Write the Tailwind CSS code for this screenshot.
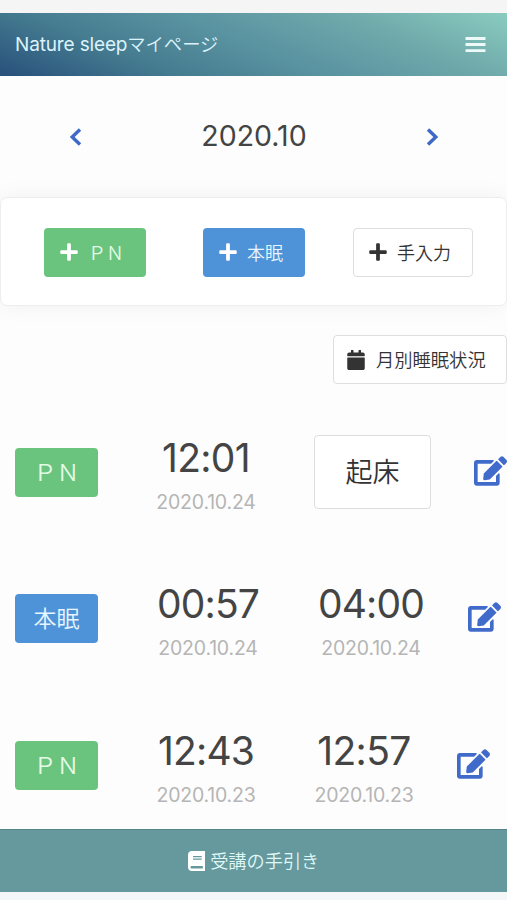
<!DOCTYPE html>
<html lang="ja">
<head>
<meta charset="utf-8">
<title>Nature sleepマイページ</title>
<script src="https://cdn.jsdelivr.net/npm/@tailwindcss/browser@4"></script>
</head>
<body class="w-[507px] h-[900px] overflow-hidden flex flex-col bg-[#fdfdfd] font-['Inter','Noto_Sans_CJK_JP',sans-serif] text-[#444] whitespace-nowrap">
<svg class="hidden">
  <symbol id="plus" viewBox="0 0 448 512"><path d="M416 208H272V64c0-17.67-14.33-32-32-32h-32c-17.67 0-32 14.33-32 32v144H32c-17.67 0-32 14.33-32 32v32c0 17.67 14.33 32 32 32h144v144c0 17.67 14.33 32 32 32h32c17.67 0 32-14.33 32-32V304h144c17.67 0 32-14.33 32-32v-32c0-17.67-14.33-32-32-32z"/></symbol>
  <symbol id="edit" viewBox="0 0 576 512"><path d="M402.6 83.2l90.2 90.2c3.8 3.8 3.8 10 0 13.8L274.4 405.6l-92.8 10.3c-12.4 1.4-22.9-9.1-21.5-21.5l10.3-92.8L388.8 83.2c3.8-3.8 10-3.8 13.8 0zm162-22.9l-48.8-48.8c-15.2-15.2-39.9-15.2-55.2 0l-35.4 35.4c-3.8 3.8-3.8 10 0 13.8l90.2 90.2c3.8 3.8 10 3.8 13.8 0l35.4-35.4c15.2-15.3 15.2-40 0-55.2zM384 346.2V448H64V128h229.8c3.2 0 6.2-1.3 8.5-3.5l40-40c7.6-7.6 2.2-20.5-8.5-20.5H48C21.5 64 0 85.5 0 112v352c0 26.5 21.5 48 48 48h352c26.5 0 48-21.5 48-48V306.2c0-10.7-12.9-16-20.5-8.5l-40 40c-2.2 2.3-3.5 5.3-3.5 8.5z"/></symbol>
</svg>

<div class="h-[12.5px] shrink-0 bg-[#f5f5f6]"></div>
<header class="h-[63.5px] shrink-0 flex items-center justify-between pl-[15px] pr-[21px] bg-[linear-gradient(22deg,#28507b_0%,#457c90_27%,#5a93a1_50%,#70aaab_75%,#8accc0_100%)] text-[#dcf3fb]">
  <h1 class="pt-[1px] text-[19px] leading-none tracking-[-0.15px]">Nature sleep<span class="text-[18.3px] font-[350] tracking-normal">マイページ</span></h1>
  <svg class="w-[21px] h-[17px]" viewBox="0 0 21 17" fill="#eefaf8"><rect x=".5" y="1" width="20" height="2.9" rx=".5"/><rect x=".5" y="7.1" width="20" height="2.9" rx=".5"/><rect x=".5" y="13.2" width="20" height="2.9" rx=".5"/></svg>
</header>

<nav class="h-[121px] shrink-0 flex items-center justify-between pl-[68px] pr-[67px]">
  <svg class="mt-px w-[14px] h-[18px]" viewBox="0 0 14 18" fill="none" stroke="#3f69c9" stroke-width="3.4"><path d="M12 1.5 4.2 9 12 16.5"/></svg>
  <span class="text-[28.5px] leading-none">2020.10</span>
  <svg class="mt-px w-[14px] h-[18px]" viewBox="0 0 14 18" fill="none" stroke="#3f69c9" stroke-width="3.4"><path d="M2 1.5 9.8 9 2 16.5"/></svg>
</nav>

<section class="h-[109px] shrink-0 flex items-center pt-px pl-[43px] rounded-[7px] border border-[#ededed] bg-white shadow-[0_0_22px_rgba(0,0,0,0.055)] text-[18px] font-[350]">
  <button class="w-[102px] h-[49px] rounded-[4px] bg-[#6bc47d] text-[#e4fbe8] flex items-center pl-[16px] gap-[10px]"><svg class="w-[18px] h-[20px]" fill="#fff"><use href="#plus"/></svg><span class="pt-[2px]">&#xFF30;&#xFF2E;</span></button>
  <button class="ml-[57px] w-[102px] h-[49px] rounded-[4px] bg-[#4e93d7] text-[#e6f5ff] flex items-center pl-[16px] gap-[10px]"><svg class="w-[18px] h-[20px]" fill="#fff"><use href="#plus"/></svg><span class="pt-[2px]">本眠</span></button>
  <button class="ml-[48px] w-[120px] h-[49px] rounded-[4px] border border-[#dedede] bg-white text-[#333] flex items-center pl-[15px] gap-[10px]"><svg class="w-[18px] h-[20px]" fill="#333"><use href="#plus"/></svg><span class="pt-[2px]">手入力</span></button>
</section>

<div class="h-[107px] shrink-0 flex justify-end pt-[29px]">
  <button class="w-[174px] h-[49px] rounded-[4px] border border-[#dedede] bg-white flex items-center pl-[13px] gap-[11px] text-[18.3px] font-[350] text-[#333]"><svg class="w-[18px] h-[20px]" viewBox="0 0 448 512" fill="#333"><path d="M12 192h424c6.6 0 12 5.4 12 12v260c0 26.5-21.5 48-48 48H48c-26.5 0-48-21.5-48-48V204c0-6.6 5.4-12 12-12zm436-44v-36c0-26.5-21.5-48-48-48h-48V12c0-6.6-5.4-12-12-12h-40c-6.6 0-12 5.4-12 12v52H160V12c0-6.6-5.4-12-12-12h-40c-6.6 0-12 5.4-12 12v52H48C21.5 64 0 85.5 0 112v36c0 6.6 5.4 12 12 12h424c6.6 0 12-5.4 12-12z"/></svg><span class="pt-[2px]">月別睡眠状況</span></button>
</div>

<main class="flex-1 min-h-0 overflow-hidden">
  <div class="h-[146.7px] flex pl-[15px]">
    <div class="mt-[34.5px] pt-[2px] w-[83px] h-[49px] rounded-[4px] bg-[#6bc47d] text-[#e4fbe8] text-[23px] font-[350] flex items-center justify-center">&#xFF30;&#xFF2E;</div>
    <div class="ml-[48px] w-[120px] pt-[24px] text-center"><p class="text-[39px] leading-[41px] tracking-[-0.7px]">12:01</p><p class="mt-[12px] text-[19.5px] leading-[24px] tracking-[-0.2px] text-[#b5b5b5]">2020.10.24</p></div>
    <button class="ml-[48px] mt-[22px] pt-[3px] w-[117px] h-[74px] rounded-[4px] border border-[#dedede] bg-white text-[27px] font-[350] text-[#333]">起床</button>
    <svg class="ml-[43px] mt-[43px] w-[33px] h-[30px] shrink-0" fill="#416bcb"><use href="#edit"/></svg>
  </div>
  <div class="h-[146.7px] flex pl-[15px]">
    <div class="mt-[34.5px] pt-[2px] w-[83px] h-[49px] rounded-[4px] bg-[#4e93d7] text-[#e6f5ff] text-[23px] font-[350] flex items-center justify-center">本眠</div>
    <div class="ml-[50px] w-[120px] pt-[23px] text-center"><p class="text-[39px] leading-[41px] tracking-[-0.8px]">00:57</p><p class="mt-[12px] text-[19.5px] leading-[24px] tracking-[-0.2px] text-[#b5b5b5]">2020.10.24</p></div>
    <div class="ml-[43px] w-[120px] pt-[23px] text-center"><p class="text-[39px] leading-[41px] tracking-[-0.8px]">04:00</p><p class="mt-[12px] text-[19.5px] leading-[24px] tracking-[-0.2px] text-[#b5b5b5]">2020.10.24</p></div>
    <svg class="ml-[37px] mt-[42px] w-[33px] h-[30px] shrink-0" fill="#416bcb"><use href="#edit"/></svg>
  </div>
  <div class="h-[146.7px] flex pl-[15px]">
    <div class="mt-[34.5px] pt-[2px] w-[83px] h-[49px] rounded-[4px] bg-[#6bc47d] text-[#e4fbe8] text-[23px] font-[350] flex items-center justify-center">&#xFF30;&#xFF2E;</div>
    <div class="ml-[48px] w-[120px] pt-[24px] text-center"><p class="text-[39px] leading-[41px] tracking-[-0.8px]">12:43</p><p class="mt-[12px] text-[19.5px] leading-[24px] tracking-[-0.2px] text-[#b5b5b5]">2020.10.23</p></div>
    <div class="ml-[38px] w-[120px] pt-[24px] text-center"><p class="text-[39px] leading-[41px] tracking-[-0.6px]">12:57</p><p class="mt-[12px] text-[19.5px] leading-[24px] tracking-[-0.2px] text-[#b5b5b5]">2020.10.23</p></div>
    <svg class="ml-[33px] mt-[43px] w-[33px] h-[30px] shrink-0" fill="#416bcb"><use href="#edit"/></svg>
  </div>
</main>

<footer class="h-[63px] shrink-0 flex items-center justify-center gap-[5px] bg-[#66999e] border-t border-[#548388] text-[18.2px] font-[350] text-[#dff8f8]">
  <svg class="w-[17.5px] h-[20px]" viewBox="0 0 448 512" fill="#fff"><path d="M448 360V24c0-13.3-10.7-24-24-24H96C43 0 0 43 0 96v320c0 53 43 96 96 96h328c13.3 0 24-10.7 24-24v-16c0-7.5-3.5-14.3-8.9-18.7-4.2-15.4-4.2-59.3 0-74.7 5.4-4.3 8.9-11.1 8.9-18.6zM128 134c0-3.3 2.7-6 6-6h212c3.3 0 6 2.7 6 6v20c0 3.3-2.7 6-6 6H134c-3.3 0-6-2.7-6-6v-20zm0 64c0-3.3 2.7-6 6-6h212c3.3 0 6 2.7 6 6v20c0 3.3-2.7 6-6 6H134c-3.3 0-6-2.7-6-6v-20zm253.4 250H96c-17.7 0-32-14.3-32-32 0-17.6 14.4-32 32-32h285.4c-1.9 17.1-1.9 46.9 0 64z"/></svg>
  <span class="leading-none pt-px">受講の手引き</span>
</footer>
<div class="h-[8.5px] shrink-0 bg-[#f4f7f7]"></div>
</body>
</html>
